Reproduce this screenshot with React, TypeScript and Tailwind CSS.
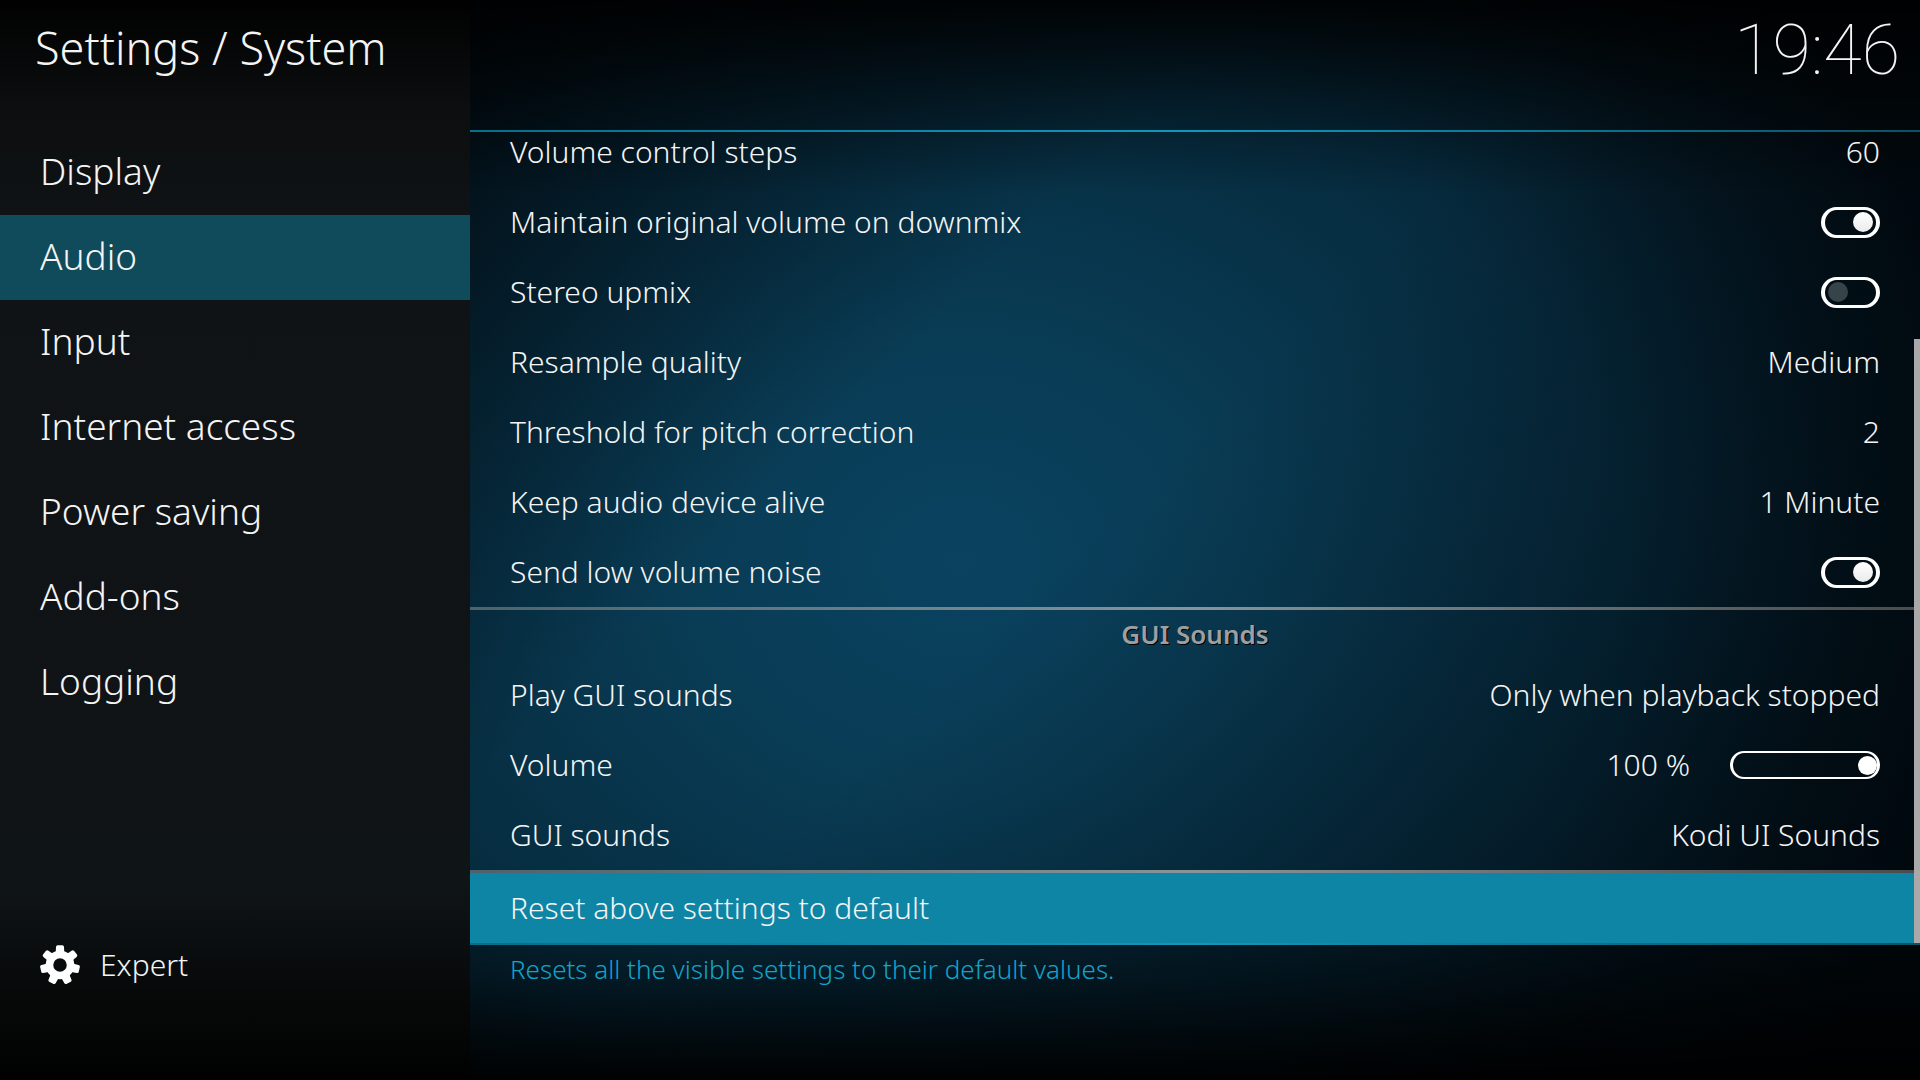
import { useState } from 'react';
import clsx from 'clsx';

type Setting =
  | { id: string; label: string; kind: 'value'; value: string }
  | { id: string; label: string; kind: 'toggle'; on: boolean }
  | { id: string; label: string; kind: 'slider'; value: number };

const sections = ['Display', 'Audio', 'Input', 'Internet access', 'Power saving', 'Add-ons', 'Logging'];

const outputSettings: Setting[] = [
  { id: 'volume-steps', label: 'Volume control steps', kind: 'value', value: '60' },
  { id: 'downmix', label: 'Maintain original volume on downmix', kind: 'toggle', on: true },
  { id: 'upmix', label: 'Stereo upmix', kind: 'toggle', on: false },
  { id: 'resample', label: 'Resample quality', kind: 'value', value: 'Medium' },
  { id: 'pitch', label: 'Threshold for pitch correction', kind: 'value', value: '2' },
  { id: 'keep-alive', label: 'Keep audio device alive', kind: 'value', value: '1 Minute' },
  { id: 'noise', label: 'Send low volume noise', kind: 'toggle', on: true },
];

const guiSettings: Setting[] = [
  { id: 'play-gui', label: 'Play GUI sounds', kind: 'value', value: 'Only when playback stopped' },
  { id: 'gui-volume', label: 'Volume', kind: 'slider', value: 100 },
  { id: 'gui-sounds', label: 'GUI sounds', kind: 'value', value: 'Kodi UI Sounds' },
];

const rowClass = 'flex h-[70px] w-full shrink-0 items-center justify-between pr-[34px] pl-10 text-left';

const GearIcon = () => (
  <svg viewBox="0 0 40 40" className="size-10" fill="white" aria-hidden="true">
    {[0, 1, 2, 3, 4, 5, 6].map((tooth) => (
      <path
        key={tooth}
        d="M14 9 Q15.6 8 15.8 6 L16 2 Q16.1 0.2 17.6 0.2 H22.4 Q23.9 0.2 24 2 L24.2 6 Q24.4 8 26 9 Z"
        transform={`rotate(${(tooth * 360) / 7} 20 20)`}
      />
    ))}
    <circle cx="20" cy="20" r="10.5" fill="none" stroke="white" strokeWidth="7.5" />
  </svg>
);

const Toggle = ({ id, on }: { id: string; on: boolean }) => {
  const [checked, setChecked] = useState(on);

  return (
    <input
      id={id}
      type="checkbox"
      checked={checked}
      onChange={(e) => setChecked(e.target.checked)}
      className="flex h-[31px] w-[59px] appearance-none items-center rounded-full border-x-4 border-y-[3px] border-white px-[3px] before:size-5 before:rounded-full before:bg-[#364449] checked:justify-end checked:before:bg-linear-to-b checked:before:from-white checked:before:to-[#ebebeb]"
    />
  );
};

const VolumeSlider = ({ id, initial }: { id: string; initial: number }) => {
  const [volume, setVolume] = useState(initial);

  return (
    <div className="flex items-center gap-10">
      <output htmlFor={id}>{volume} %</output>
      <input
        id={id}
        type="range"
        min={0}
        max={100}
        value={volume}
        onChange={(e) => setVolume(Number(e.target.value))}
        className="h-7 w-[150px] appearance-none rounded-full border-x-[3px] border-y-2 border-white bg-transparent [&::-webkit-slider-thumb]:size-[19px] [&::-webkit-slider-thumb]:appearance-none [&::-webkit-slider-thumb]:rounded-full [&::-webkit-slider-thumb]:bg-white"
      />
    </div>
  );
};

const SettingRow = ({ setting }: { setting: Setting }) => {
  if (setting.kind === 'value') {
    return (
      <button type="button" className={rowClass}>
        <span>{setting.label}</span>
        <span>{setting.value}</span>
      </button>
    );
  }

  return (
    <div className={rowClass}>
      <label htmlFor={setting.id}>{setting.label}</label>
      {setting.kind === 'toggle' ? (
        <Toggle id={setting.id} on={setting.on} />
      ) : (
        <VolumeSlider id={setting.id} initial={setting.value} />
      )}
    </div>
  );
};

const Separator = () => (
  <div className="h-[3px] shrink-0 bg-linear-to-r from-[#4d636c] via-[#87959b] to-[#4a4c4d]" />
);

const App = () => {
  const [section, setSection] = useState('Audio');

  return (
    <div className="flex h-screen overflow-hidden bg-[#010508] bg-[linear-gradient(to_bottom,rgba(0,0,0,0.9)_0%,rgba(0,0,0,0.4)_9%,transparent_18%,transparent_80%,rgba(0,0,0,0.45)_91%,rgba(0,0,0,0.95)_100%),linear-gradient(135deg,rgba(0,5,9,0.9)_12%,transparent_42%,transparent_54%,rgba(0,5,9,0.5)_88%),radial-gradient(ellipse_55%_80%_at_50%_52%,#0a4260_0%,#093c55_26%,#062a3d_62%,#03141e_85%,#010a10_100%)] font-['Noto_Sans',sans-serif] text-[30px] leading-10 font-light text-[#f4f4f4]">
      <aside className="flex w-[470px] shrink-0 flex-col bg-[linear-gradient(to_bottom,#010101_0%,#0c0e0f_10%,#0f1315_20%,#0f1417_82%,#070909_92%,#010101_100%)]">
        <h1 className="h-[130px] px-[35px] pt-4 text-[45px] leading-[64px]">Settings / System</h1>
        <nav className="flex flex-col">
          {sections.map((name) => (
            <button
              key={name}
              type="button"
              onClick={() => setSection(name)}
              className={clsx('h-[85px] px-10 pb-1 text-left text-[37px]', name === section && 'bg-[#104b5b]')}
            >
              {name}
            </button>
          ))}
        </nav>
        <button type="button" className="mt-auto mb-[95px] flex items-center gap-5 px-10">
          <GearIcon />
          Expert
        </button>
      </aside>

      <main className="flex min-w-0 flex-1 flex-col">
        <header className="flex h-[130px] shrink-0 justify-end px-5 pt-2">
          <time className="font-[Roboto,sans-serif] text-[70px] leading-[84px] font-thin">19:46</time>
        </header>

        <div className="h-0.5 shrink-0 bg-linear-to-r from-[#0b6d87] via-[#1297bb] to-[#0a5263]" />

        <div className="flex h-[811px] shrink-0">
          {/* Scrolled to the end, so the first row is cut off by the header line */}
          <div className="flex min-w-0 flex-1 flex-col justify-end overflow-hidden">
            {outputSettings.map((setting) => (
              <SettingRow key={setting.id} setting={setting} />
            ))}
            <Separator />
            <h2 className="h-[50px] shrink-0 pt-1 pl-1.5 text-center text-[26px] font-semibold text-[#9f9f9f] [text-shadow:1px_1px_0_#000]">
              GUI Sounds
            </h2>
            {guiSettings.map((setting) => (
              <SettingRow key={setting.id} setting={setting} />
            ))}
            <Separator />
            <button type="button" className={clsx(rowClass, 'bg-[#0f85a5]')}>
              Reset above settings to default
            </button>
          </div>
          <div className="flex w-1.5 flex-col justify-end">
            <div className="h-[604px] bg-[#a9a9a9]" />
          </div>
        </div>

        <div className="h-0.5 shrink-0 bg-linear-to-r from-[#0b6d87] via-[#1297bb] to-[#0a5263]" />

        <p className="px-10 pt-1 text-[26px] text-[#14a3ca]">Resets all the visible settings to their default values.</p>
      </main>
    </div>
  );
};

export default App;
